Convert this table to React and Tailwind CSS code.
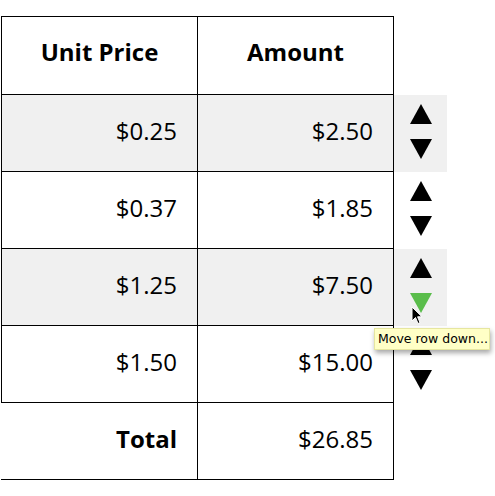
const rows = [
  { price: "$0.25", amount: "$2.50" },
  { price: "$0.37", amount: "$1.85" },
  { price: "$1.25", amount: "$7.50", hot: true },
  { price: "$1.50", amount: "$15.00" },
];

function Up() {
  return (
    <svg width="22" height="20" viewBox="0 0 22 20">
      <polygon points="11,0 22,20 0,20" fill="#000" />
    </svg>
  );
}

function Down({ color = "#000" }) {
  return (
    <svg width="22" height="20" viewBox="0 0 22 20">
      <polygon points="0,0 22,0 11,20" fill={color} />
    </svg>
  );
}

export default function App() {
  return (
    <div
      className="relative w-[495px] h-[496px] overflow-hidden bg-white text-black"
      style={{ fontFamily: '"Open Sans", sans-serif' }}
    >
      <div className="ml-px mt-4 flex flex-col">
        {/* header */}
        <div className="flex h-[79px]">
          <div className="w-[197px] border border-black flex items-center justify-center pb-2 text-[24px] font-bold">
            Unit Price
          </div>
          <div className="w-[196px] border-y border-r border-black flex items-center justify-center pb-2 text-[24px] font-bold">
            Amount
          </div>
        </div>

        {rows.map((r, i) => {
          const bg = i % 2 === 0 ? "bg-[#f0f0f0]" : "bg-white";
          return (
            <div key={i} className="flex h-[77px]">
              <div className={`w-[197px] border-x border-b border-black flex items-center justify-end pr-5 pb-1 text-[24px] ${bg}`}>
                {r.price}
              </div>
              <div className={`w-[196px] border-r border-b border-black flex items-center justify-end pr-5 pb-1 text-[24px] ${bg}`}>
                {r.amount}
              </div>
              <div className={`w-[53px] flex flex-col items-center justify-center gap-[15px] pb-1 ${bg}`}>
                <Up />
                <Down color={r.hot ? "#5abd4b" : "#000"} />
              </div>
            </div>
          );
        })}

        {/* total */}
        <div className="flex h-[77px]">
          <div className="w-[197px] border-r border-b border-black flex items-center justify-end pr-5 pb-1 text-[24px] font-bold">
            Total
          </div>
          <div className="w-[196px] border-r border-b border-black flex items-center justify-end pr-5 pb-1 text-[24px]">
            $26.85
          </div>
        </div>
      </div>

      {/* cursor */}
      <svg
        className="absolute left-[411px] top-[306px]"
        width="12"
        height="19"
        viewBox="0 0 12 19"
      >
        <path
          d="M1 1 L1 15 L4.5 11.5 L7 17.5 L9 16.6 L6.6 10.8 L11 10.8 Z"
          fill="#000"
          stroke="#fff"
          strokeWidth="1"
        />
      </svg>

      {/* tooltip */}
      <div
        className="absolute left-[374px] top-[328px] w-[116px] h-[22px] bg-[#ffffc6] border border-[#e6e6a0] shadow-[1px_3px_5px_rgba(0,0,0,0.35)] pl-[3px] flex items-center text-[12.5px] text-black whitespace-nowrap"
        style={{ fontFamily: '"DejaVu Sans", sans-serif' }}
      >
        Move row down...
      </div>
    </div>
  );
}
